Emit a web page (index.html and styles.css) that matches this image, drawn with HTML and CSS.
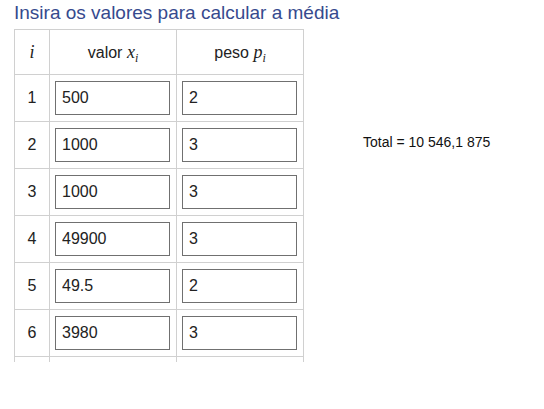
FILE: index.html
```html
<!DOCTYPE html>
<html lang="pt">
<head>
<meta charset="utf-8">
<title>Média ponderada</title>
<link rel="stylesheet" href="styles.css">
</head>
<body>
<h1 class="title">Insira os valores para calcular a média</h1>
<div class="layout">
  <div class="table-wrap">
    <table class="grid">
      <thead>
        <tr>
          <th class="c-idx"><span class="math">i</span></th>
          <th class="c-val">valor <span class="math">x<sub>i</sub></span></th>
          <th class="c-val">peso <span class="math">p<sub>i</sub></span></th>
        </tr>
      </thead>
      <tbody>
        <tr><td class="c-idx">1</td><td class="c-val"><input class="field" value="500"></td><td class="c-val"><input class="field" value="2"></td></tr>
        <tr><td class="c-idx">2</td><td class="c-val"><input class="field" value="1000"></td><td class="c-val"><input class="field" value="3"></td></tr>
        <tr><td class="c-idx">3</td><td class="c-val"><input class="field" value="1000"></td><td class="c-val"><input class="field" value="3"></td></tr>
        <tr><td class="c-idx">4</td><td class="c-val"><input class="field" value="49900"></td><td class="c-val"><input class="field" value="3"></td></tr>
        <tr><td class="c-idx">5</td><td class="c-val"><input class="field" value="49.5"></td><td class="c-val"><input class="field" value="2"></td></tr>
        <tr><td class="c-idx">6</td><td class="c-val"><input class="field" value="3980"></td><td class="c-val"><input class="field" value="3"></td></tr>
        <tr><td class="c-idx"></td><td class="c-val"><input class="field" value=""></td><td class="c-val"><input class="field" value=""></td></tr>
      </tbody>
    </table>
  </div>
  <div class="total">Total = 10 546,1 875</div>
</div>
</body>
</html>
```

FILE: styles.css
```css
html, body {
  margin: 0;
  padding: 0;
  background: #ffffff;
}

body {
  font-family: "Liberation Sans", Arial, sans-serif;
  color: #222222;
}

.title {
  margin: 0 0 5px 0;
  padding: 2px 0 0 14px;
  font-size: 19px;
  line-height: 22px;
  font-weight: normal;
  color: #364a8e;
}

.layout {
  display: flex;
  align-items: flex-start;
  padding-left: 14px;
  gap: 59px;
}

.table-wrap {
  height: 333px;
  overflow: hidden;
}

.grid {
  border-collapse: separate;
  border-spacing: 0;
  table-layout: fixed;
  border-top: 1px solid #d0d0d0;
  border-left: 1px solid #d0d0d0;
}

.grid th,
.grid td {
  border-right: 1px solid #d0d0d0;
  border-bottom: 1px solid #d0d0d0;
  padding: 0;
  text-align: center;
  vertical-align: middle;
  font-weight: normal;
}

.grid th {
  height: 44px;
  font-size: 16px;
  color: #222222;
}

.grid td {
  height: 46px;
  font-size: 16px;
  color: #222222;
}

.c-idx {
  width: 34px;
}

.c-val {
  width: 126px;
}

.grid td.c-val {
  text-align: left;
  padding-left: 5px;
  width: 121px;
}

.math {
  font-family: "Liberation Serif", "Times New Roman", serif;
  font-style: italic;
  font-size: 18px;
}

.math sub {
  font-size: 12px;
  vertical-align: -4px;
  line-height: 0;
}

.field {
  display: block;
  box-sizing: border-box;
  width: 115px;
  height: 34px;
  margin: 0;
  padding: 0 0 0 6px;
  border: 1px solid #707070;
  border-radius: 0;
  background: #ffffff;
  font-family: "Liberation Sans", Arial, sans-serif;
  font-size: 16px;
  color: #222222;
  outline: none;
}

.total {
  margin-top: 105px;
  font-size: 14px;
  line-height: 16px;
  color: #111111;
  white-space: nowrap;
}
```
